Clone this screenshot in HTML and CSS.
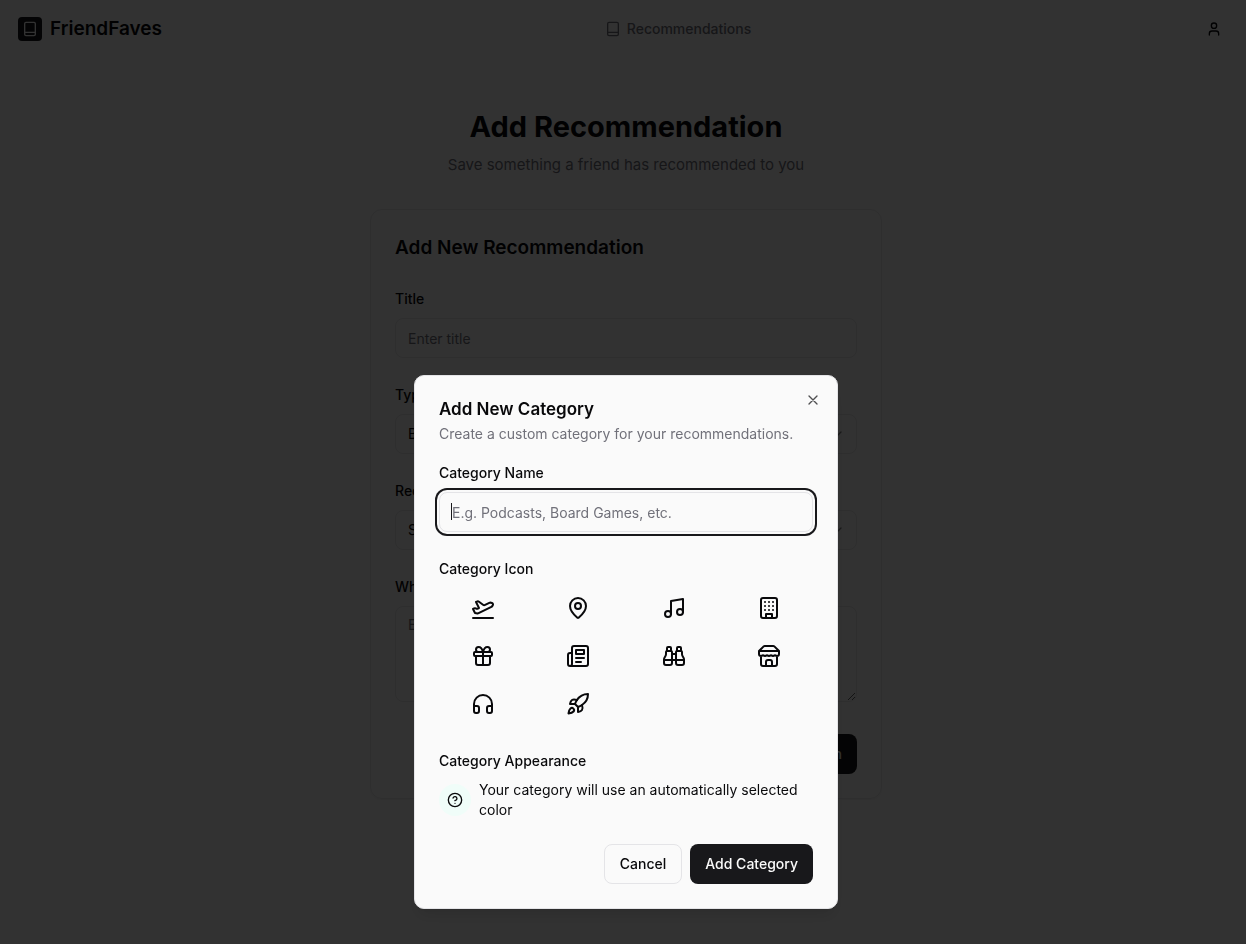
FILE: index.html
```html
<!DOCTYPE html>
<html lang="en">
<head>
<meta charset="utf-8">
<meta name="viewport" content="width=device-width, initial-scale=1">
<title>FriendFaves - Add Recommendation</title>
<link rel="stylesheet" href="styles.css">
</head>
<body>
<div class="page">
  <header class="site-header">
    <a class="brand" href="#">
      <span class="brand-mark">
        <svg class="icon" viewBox="0 0 24 24"><rect x="4" y="2" width="16" height="20" rx="2"/><path d="M4 17h16"/></svg>
      </span>
      <span class="brand-name">FriendFaves</span>
    </a>
    <nav>
      <a class="nav-link" href="#">
        <svg class="icon" viewBox="0 0 24 24"><rect x="4" y="2" width="16" height="20" rx="2"/><path d="M4 17h16"/></svg>
        Recommendations
      </a>
    </nav>
    <button class="user-button" type="button" aria-label="Account">
      <svg class="icon" viewBox="0 0 24 24"><circle cx="12" cy="7" r="4"/><path d="M19 21v-2a4 4 0 0 0-4-4H9a4 4 0 0 0-4 4v2"/></svg>
    </button>
  </header>

  <main class="content">
    <h1 class="page-title">Add Recommendation</h1>
    <p class="page-subtitle">Save something a friend has recommended to you</p>
    <section class="card">
      <h2 class="card-title">Add New Recommendation</h2>
      <form class="stack">
        <div class="field">
          <label class="label" for="title">Title</label>
          <input class="control" id="title" type="text" placeholder="Enter title">
        </div>
        <div class="field">
          <label class="label" for="type">Type</label>
          <div class="control-wrap">
            <select class="control" id="type"><option>Book</option></select>
            <svg class="icon chevron" viewBox="0 0 24 24"><path d="m6 9 6 6 6-6"/></svg>
          </div>
        </div>
        <div class="field">
          <label class="label" for="friend">Recommended By</label>
          <div class="control-wrap">
            <select class="control" id="friend"><option>Select a friend</option></select>
            <svg class="icon chevron" viewBox="0 0 24 24"><path d="m6 9 6 6 6-6"/></svg>
          </div>
        </div>
        <div class="field">
          <label class="label" for="reason">Why</label>
          <textarea class="control control-area" id="reason" placeholder="Enter reason"></textarea>
        </div>
        <div class="card-actions">
          <button class="button button-primary" type="button">Add Recommendation</button>
        </div>
      </form>
    </section>
  </main>
</div>

<div class="overlay">
  <div class="dialog" role="dialog" aria-modal="true" aria-labelledby="dialog-title">
    <h2 class="dialog-title" id="dialog-title">Add New Category</h2>
    <p class="dialog-text">Create a custom category for your recommendations.</p>
    <button class="close-button" type="button" aria-label="Close">
      <svg class="icon" viewBox="0 0 24 24"><path d="M18 6 6 18M6 6l12 12"/></svg>
    </button>
    <form class="stack">
      <div class="field">
        <label class="label" for="category">Category Name</label>
        <div class="control-wrap">
          <input class="control control-focus" id="category" type="text" placeholder="E.g. Podcasts, Board Games, etc.">
          <span class="caret"></span>
        </div>
      </div>
      <div class="field">
        <span class="label" id="icon-label">Category Icon</span>
        <div class="icon-grid" role="group" aria-labelledby="icon-label">
          <button class="icon-option" type="button" aria-label="Travel"><svg class="icon icon-lg" viewBox="0 0 24 24"><path d="M2 22h20"/><path d="M6.360 17.400 4 17l-2-4 1.100-.550a2 2 0 0 1 1.800 0l.170.100a2 2 0 0 0 1.800 0L8 12 5 6l.900-.450a2 2 0 0 1 2.090.200l4.020 3a2 2 0 0 0 2.100.200l4.190-2.060a2.410 2.410 0 0 1 1.730-.170L21 7a1.400 1.400 0 0 1 .870 1.990l-.380.760c-.230.460-.600.840-1.070 1.080L7.580 17.200a2 2 0 0 1-1.220.180Z"/></svg></button>
          <button class="icon-option" type="button" aria-label="Place"><svg class="icon icon-lg" viewBox="0 0 24 24"><path d="M20 10c0 4.990-5.540 10.190-7.400 11.800a1 1 0 0 1-1.200 0C9.540 20.190 4 14.990 4 10a8 8 0 0 1 16 0"/><circle cx="12" cy="10" r="3"/></svg></button>
          <button class="icon-option" type="button" aria-label="Music"><svg class="icon icon-lg" viewBox="0 0 24 24"><path d="M9 18V5l12-2v13"/><circle cx="6" cy="18" r="3"/><circle cx="18" cy="16" r="3"/></svg></button>
          <button class="icon-option" type="button" aria-label="Building"><svg class="icon icon-lg" viewBox="0 0 24 24"><rect x="4" y="2" width="16" height="20" rx="2"/><path d="M9 22v-4h6v4M8 6h.010M12 6h.010M16 6h.010M8 10h.010M12 10h.010M16 10h.010M8 14h.010M12 14h.010M16 14h.010"/></svg></button>
          <button class="icon-option" type="button" aria-label="Gift"><svg class="icon icon-lg" viewBox="0 0 24 24"><rect x="3" y="8" width="18" height="4" rx="1"/><path d="M12 8v13M19 12v7a2 2 0 0 1-2 2H7a2 2 0 0 1-2-2v-7M7.500 8a2.500 2.500 0 0 1 0-5A4.800 8 0 0 1 12 8a4.800 8 0 0 1 4.500-5 2.500 2.500 0 0 1 0 5"/></svg></button>
          <button class="icon-option" type="button" aria-label="News"><svg class="icon icon-lg" viewBox="0 0 24 24"><path d="M4 22h16a2 2 0 0 0 2-2V4a2 2 0 0 0-2-2H8a2 2 0 0 0-2 2v16a2 2 0 0 1-2 2Zm0 0a2 2 0 0 1-2-2v-9c0-1.100.900-2 2-2h2M18 14h-8M15 18h-5"/><path d="M10 6h8v4h-8Z"/></svg></button>
          <button class="icon-option" type="button" aria-label="Sights"><svg class="icon icon-lg" viewBox="0 0 24 24"><path d="M10 10h4M19 7V4a1 1 0 0 0-1-1h-2a1 1 0 0 0-1 1v3M20 21a2 2 0 0 0 2-2v-3.850c0-1.390-2-2.960-2-4.830V8a1 1 0 0 0-1-1h-4a1 1 0 0 0-1 1v11a2 2 0 0 0 2 2ZM22 16H2M4 21a2 2 0 0 1-2-2v-3.850c0-1.390 2-2.960 2-4.830V8a1 1 0 0 1 1-1h4a1 1 0 0 1 1 1v11a2 2 0 0 1-2 2ZM9 7V4a1 1 0 0 0-1-1H6a1 1 0 0 0-1 1v3"/></svg></button>
          <button class="icon-option" type="button" aria-label="Store"><svg class="icon icon-lg" viewBox="0 0 24 24"><path d="m2 7 4.410-4.410A2 2 0 0 1 7.830 2h8.340a2 2 0 0 1 1.420.590L22 7M4 12v8a2 2 0 0 0 2 2h12a2 2 0 0 0 2-2v-8M15 22v-4a2 2 0 0 0-2-2h-2a2 2 0 0 0-2 2v4M2 7h20v3a2 2 0 0 1-2 2 2.700 2.700 0 0 1-1.590-.630.700.700 0 0 0-.820 0A2.700 2.700 0 0 1 16 12a2.700 2.700 0 0 1-1.590-.630.700.700 0 0 0-.820 0A2.700 2.700 0 0 1 12 12a2.700 2.700 0 0 1-1.590-.630.700.700 0 0 0-.820 0A2.700 2.700 0 0 1 8 12a2.700 2.700 0 0 1-1.590-.630.700.700 0 0 0-.820 0A2.700 2.700 0 0 1 4 12a2 2 0 0 1-2-2V7"/></svg></button>
          <button class="icon-option" type="button" aria-label="Audio"><svg class="icon icon-lg" viewBox="0 0 24 24"><path d="M3 14h3a2 2 0 0 1 2 2v3a2 2 0 0 1-2 2H5a2 2 0 0 1-2-2v-7a9 9 0 0 1 18 0v7a2 2 0 0 1-2 2h-1a2 2 0 0 1-2-2v-3a2 2 0 0 1 2-2h3"/></svg></button>
          <button class="icon-option" type="button" aria-label="Rocket"><svg class="icon icon-lg" viewBox="0 0 24 24"><path d="M4.500 16.500c-1.500 1.260-2 5-2 5s3.740-.500 5-2c.710-.840.700-2.130-.090-2.910a2.180 2.180 0 0 0-2.910-.090ZM12 15l-3-3a22 22 0 0 1 2-3.950A12.880 12.880 0 0 1 22 2c0 2.720-.780 7.500-6 11a22.350 22.350 0 0 1-4 2Z"/><path d="M9 12H4s.550-3.030 2-4c1.620-1.080 5 0 5 0M12 15v5s3.030-.550 4-2c1.080-1.620 0-5 0-5"/></svg></button>
        </div>
      </div>
      <div class="field">
        <span class="label">Category Appearance</span>
        <div class="appearance">
          <span class="swatch"><svg class="icon" viewBox="0 0 24 24"><circle cx="12" cy="12" r="10"/><path d="M9.090 9a3 3 0 0 1 5.830 1c0 2-3 3-3 3M12 17h.010"/></svg></span>
          <span>Your category will use an automatically selected color</span>
        </div>
      </div>
      <div class="dialog-actions">
        <button class="button button-outline" type="button">Cancel</button>
        <button class="button button-primary" type="button">Add Category</button>
      </div>
    </form>
  </div>
</div>
</body>
</html>
```
FILE: styles.css
```css
* {
  box-sizing: border-box;
}

body {
  margin: 0;
  background: #fafafa;
  color: #09090b;
  font-family: Inter, "Liberation Sans", sans-serif;
  font-size: 14px;
  line-height: 20px;
}

h1, h2, p {
  margin: 0;
}

a {
  color: inherit;
  text-decoration: none;
}

button, input, select, textarea {
  font: inherit;
  color: inherit;
}

.icon {
  display: block;
  flex: none;
  width: 16px;
  height: 16px;
  fill: none;
  stroke: currentColor;
  stroke-width: 2;
  stroke-linecap: round;
  stroke-linejoin: round;
}

.icon-lg {
  width: 24px;
  height: 24px;
}

.page {
  min-height: 100vh;
  padding-left: 6px;
}

.site-header {
  display: flex;
  align-items: center;
  justify-content: space-between;
  height: 58px;
  padding: 0 12px;
}

.brand {
  display: flex;
  align-items: center;
  gap: 8px;
}

.brand-mark {
  display: grid;
  place-items: center;
  width: 24px;
  height: 24px;
  border-radius: 4px;
  background: #18181b;
  color: #fafafa;
}

.brand-name {
  font-size: 19px;
  font-weight: 600;
  line-height: 28px;
}

.nav-link {
  display: flex;
  align-items: center;
  gap: 6px;
  color: #71717a;
  font-weight: 500;
}

.user-button {
  display: grid;
  place-items: center;
  width: 40px;
  height: 40px;
  padding: 0;
  border: 0;
  background: transparent;
}

.content {
  max-width: 512px;
  margin: 0 auto;
  padding: 51px 0 48px;
}

.page-title {
  font-size: 29px;
  font-weight: 700;
  line-height: 36px;
  text-align: center;
}

.page-subtitle {
  margin: 8px 0 32px;
  color: #71717a;
  font-size: 15px;
  line-height: 24px;
  text-align: center;
}

.card {
  padding: 24px;
  border: 1px solid #e4e4e7;
  border-radius: 12px;
  box-shadow: 0 1px 2px rgba(0, 0, 0, 0.05);
}

.card-title {
  margin-bottom: 24px;
  font-size: 19px;
  font-weight: 600;
  line-height: 28px;
}

.stack {
  display: flex;
  flex-direction: column;
  gap: 24px;
}

.field {
  display: flex;
  flex-direction: column;
  gap: 8px;
}

.label {
  padding-top: 2px;
  font-weight: 500;
  line-height: 22px;
}

.control-wrap {
  position: relative;
}

.control {
  display: block;
  width: 100%;
  height: 40px;
  padding: 8px 12px;
  border: 1px solid #e4e4e7;
  border-radius: 8px;
  background: #fafafa;
  outline: none;
  appearance: none;
}

.control::placeholder {
  color: #71717a;
  opacity: 1;
}

.control-area {
  height: 96px;
  resize: vertical;
}

.control-focus {
  box-shadow: 0 0 0 2px #fafafa, 0 0 0 4px #18181b;
}

.chevron {
  position: absolute;
  top: 12px;
  right: 12px;
  opacity: 0.5;
  pointer-events: none;
}

.caret {
  position: absolute;
  top: 11px;
  left: 12px;
  width: 1px;
  height: 17px;
  background: #18181b;
}

.card-actions {
  display: flex;
  justify-content: flex-end;
  padding-top: 8px;
}

.button {
  height: 40px;
  padding: 0 15px;
  border: 0;
  border-radius: 8px;
  font-weight: 500;
}

.button-primary {
  background: #18181b;
  color: #fafafa;
}

.button-outline {
  border: 1px solid #e4e4e7;
  background: #fafafa;
}

.overlay {
  position: fixed;
  inset: 0;
  display: flex;
  align-items: flex-start;
  justify-content: center;
  padding: 375px 0 0 6px;
  overflow: hidden;
  background: rgba(0, 0, 0, 0.8);
}

.dialog {
  position: relative;
  width: 100%;
  max-width: 424px;
  padding: 24px;
  border: 1px solid #e4e4e7;
  border-radius: 10px;
  background: #fafafa;
  box-shadow: 0 10px 15px -3px rgba(0, 0, 0, 0.1), 0 4px 6px -4px rgba(0, 0, 0, 0.1);
}

.dialog-title {
  font-size: 17px;
  font-weight: 600;
  line-height: 18px;
}

.dialog-text {
  margin: 6px 0 16px;
  color: #71717a;
}

.close-button {
  position: absolute;
  top: 16px;
  right: 16px;
  padding: 0;
  border: 0;
  background: transparent;
  opacity: 0.7;
}

.icon-grid {
  display: grid;
  grid-template-columns: repeat(4, 1fr);
  gap: 8px;
}

.icon-option {
  display: grid;
  place-items: center;
  height: 40px;
  padding: 0;
  border: 0;
  background: transparent;
}

.appearance {
  display: flex;
  align-items: center;
  gap: 8px;
}

.swatch {
  display: grid;
  flex: none;
  place-items: center;
  width: 32px;
  height: 32px;
  border-radius: 50%;
  background: #f0fdf9;
}

.dialog-actions {
  display: flex;
  justify-content: flex-end;
  gap: 8px;
}
```
